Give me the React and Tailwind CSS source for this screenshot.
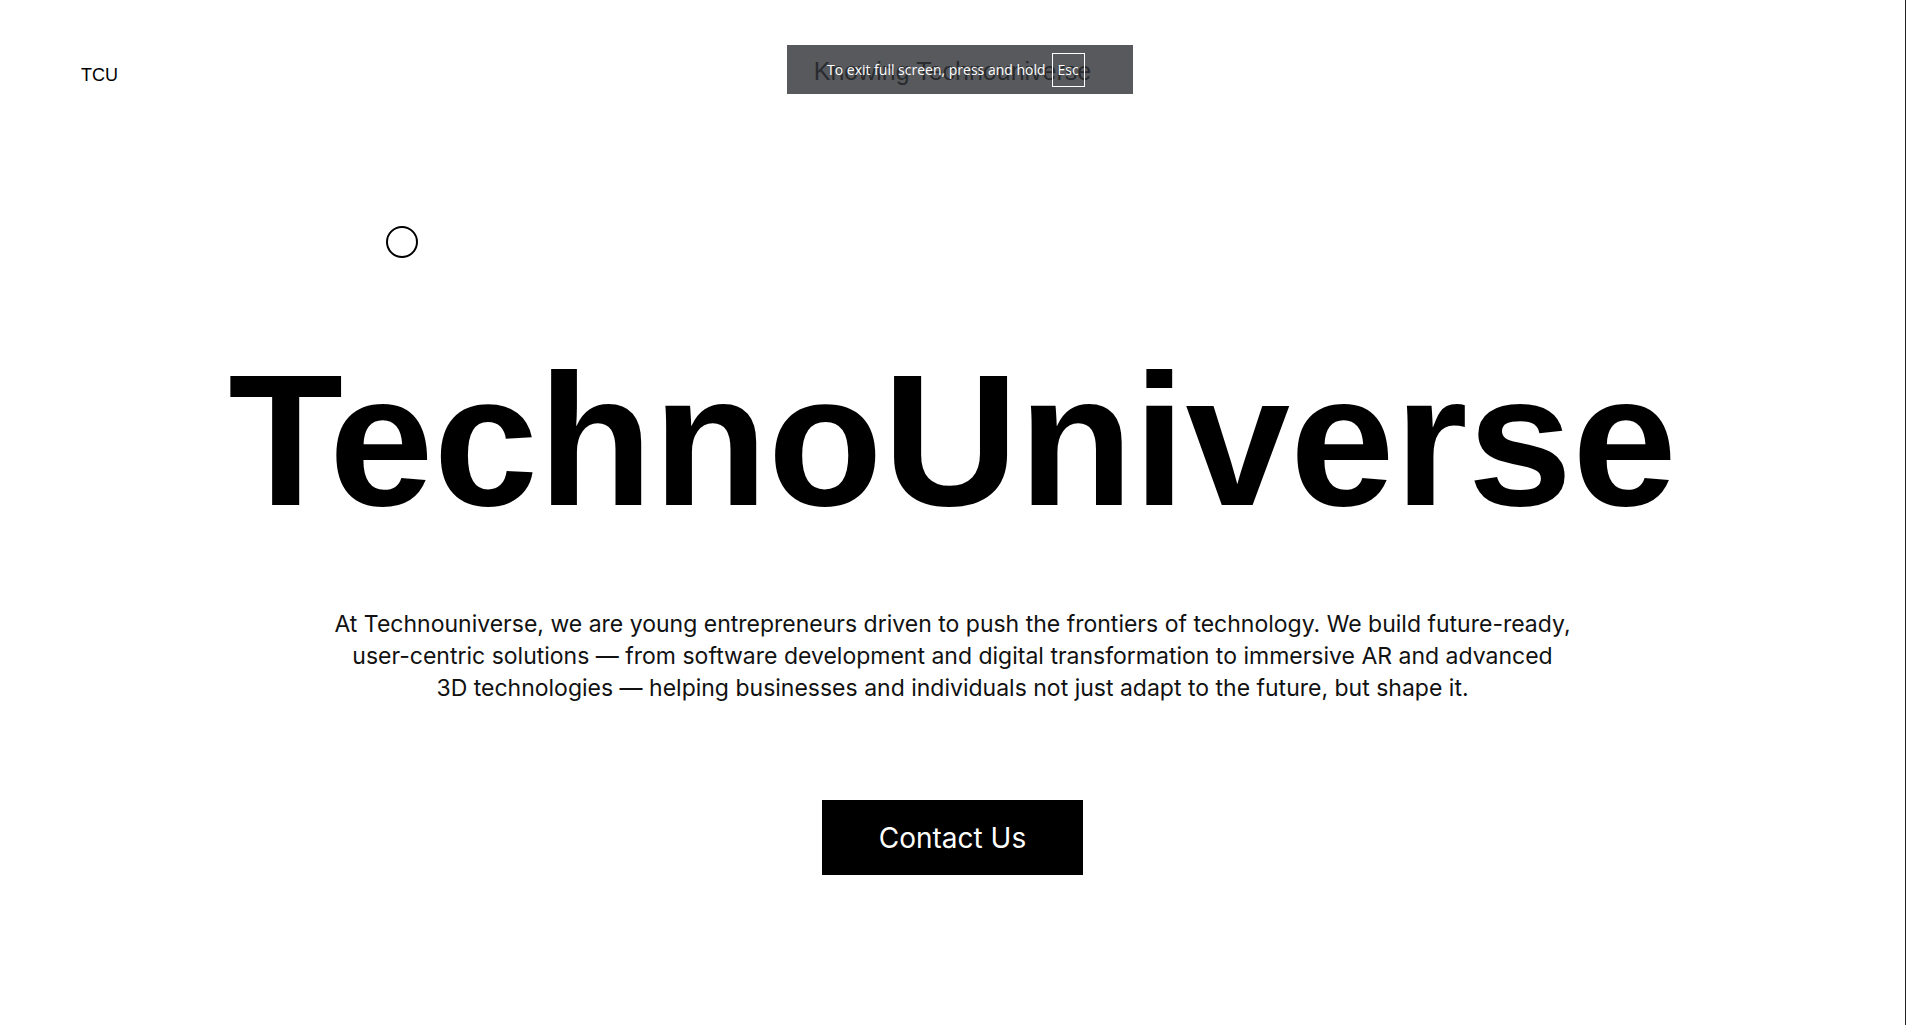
export default function App() {
  return (
    <div className="relative min-h-screen w-full bg-white text-black border-r border-[#222]">
      {/* Header */}
      <header className="grid grid-cols-[1fr_auto_1fr] items-start pt-[55px] px-[81px]">
        <div className="mt-[6px] text-[18px] leading-[28px] font-['Liberation_Sans',Arial,sans-serif]">
          TCU
        </div>
        <nav className="text-[25px] leading-[32px] text-black font-['Liberation_Sans',Arial,sans-serif]">
          Knowing Technouniverse
        </nav>
        <div />
      </header>

      {/* Hero */}
      <main className="flex flex-col items-center mt-[257px]">
        <h1 className="text-[188px] leading-none font-bold font-['Liberation_Sans',Arial,sans-serif]">
          TechnoUniverse
        </h1>
        <p className="mt-[74px] text-center text-[23px] leading-[32px] text-[#111] font-['Inter',sans-serif]">
          <span className="block whitespace-nowrap">
            At Technouniverse, we are young entrepreneurs driven to push the frontiers of technology. We build future-ready,
          </span>
          <span className="block whitespace-nowrap">
            user-centric solutions — from software development and digital transformation to immersive AR and advanced
          </span>
          <span className="block whitespace-nowrap">
            3D technologies — helping businesses and individuals not just adapt to the future, but shape it.
          </span>
        </p>
        <button className="mt-[96px] w-[261px] h-[75px] bg-black text-white text-[28px] font-['Inter',sans-serif] flex items-center justify-center">
          Contact Us
        </button>
      </main>

      {/* custom cursor */}
      <div className="absolute left-[386px] top-[226px] w-8 h-8 rounded-full border-2 border-black pointer-events-none" />

      {/* fullscreen toast */}
      <div className="absolute left-[787px] top-[45px] w-[346px] h-[49px] bg-[rgba(50,52,56,0.82)] flex items-center pl-[40px] gap-[6px] text-white text-[14px] font-['Open_Sans','Noto_Sans',sans-serif]">
        <span>To exit full screen, press and hold</span>
        <span className="border border-white h-[34px] w-[33px] flex items-center justify-center">Esc</span>
      </div>
    </div>
  );
}
